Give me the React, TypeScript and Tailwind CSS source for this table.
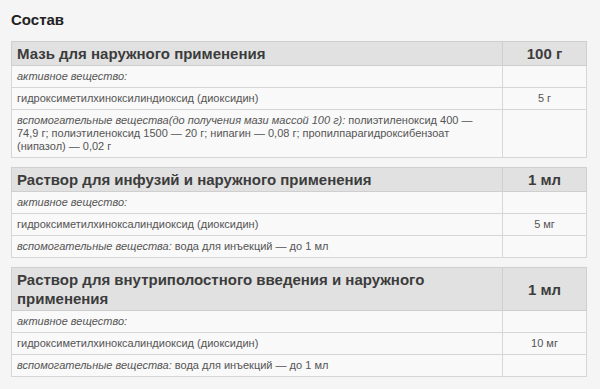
import React from 'react'

interface Row {
  label: React.ReactNode
  value?: string
}

interface Block {
  title: string
  unit: string
  rows: Row[]
}

const blocks: Block[] = [
  {
    title: 'Мазь для наружного применения',
    unit: '100 г',
    rows: [
      { label: <i>активное вещество:</i> },
      { label: 'гидроксиметилхиноксилиндиоксид (диоксидин)', value: '5 г' },
      {
        label: (
          <>
            <i>вспомогательные вещества(до получения мази массой 100 г):</i> полиэтиленоксид 400 —
            74,9 г; полиэтиленоксид 1500 — 20 г; нипагин — 0,08 г; пропилпарагидроксибензоат
            (нипазол) — 0,02 г
          </>
        ),
      },
    ],
  },
  {
    title: 'Раствор для инфузий и наружного применения',
    unit: '1 мл',
    rows: [
      { label: <i>активное вещество:</i> },
      { label: 'гидроксиметилхиноксалиндиоксид (диоксидин)', value: '5 мг' },
      {
        label: (
          <>
            <i>вспомогательные вещества:</i> вода для инъекций — до 1 мл
          </>
        ),
      },
    ],
  },
  {
    title: 'Раствор для внутриполостного введения и наружного применения',
    unit: '1 мл',
    rows: [
      { label: <i>активное вещество:</i> },
      { label: 'гидроксиметилхиноксалиндиоксид (диоксидин)', value: '10 мг' },
      {
        label: (
          <>
            <i>вспомогательные вещества:</i> вода для инъекций — до 1 мл
          </>
        ),
      },
    ],
  },
]

const CompositionTable = ({ block }: { block: Block }) => (
  <table className="mb-[9px] w-[576px] table-fixed border-collapse">
    <colgroup>
      <col className="w-[491px]" />
      <col />
    </colgroup>
    <thead>
      <tr className="bg-[#e1e1e1]">
        <th className="border border-[#cfcfcf] px-[5px] py-[2px] text-left text-[15px] font-bold leading-[19px] text-[#3c3c3c]">
          {block.title}
        </th>
        <th className="border border-[#cfcfcf] px-[5px] py-[2px] text-center text-[15px] font-bold leading-[19px] text-[#3c3c3c]">
          {block.unit}
        </th>
      </tr>
    </thead>
    <tbody>
      {block.rows.map((row, i) => (
        <tr key={i} className="bg-[#f9f9f9]">
          <td className="border border-[#d6d6d6] py-[4px] pl-[5px] pr-[12px] align-top text-[11px] leading-[13px] text-[#555]">
            {row.label}
          </td>
          <td className="border border-[#d6d6d6] px-[5px] py-[4px] text-center align-middle text-[11px] leading-[13px] text-[#555]">
            {row.value}
          </td>
        </tr>
      ))}
    </tbody>
  </table>
)

const App = () => {
  return (
    <div
      className="h-[389px] w-[600px] bg-[#f5f5f5] pl-[11px] pt-[11px]"
      style={{ fontFamily: '"Liberation Sans", Arial, sans-serif' }}
    >
      <h2 className="mb-[12px] text-[15px] font-bold leading-[18px] text-[#222]">Состав</h2>
      {blocks.map((b) => (
        <CompositionTable key={b.title} block={b} />
      ))}
    </div>
  )
}

export default App
